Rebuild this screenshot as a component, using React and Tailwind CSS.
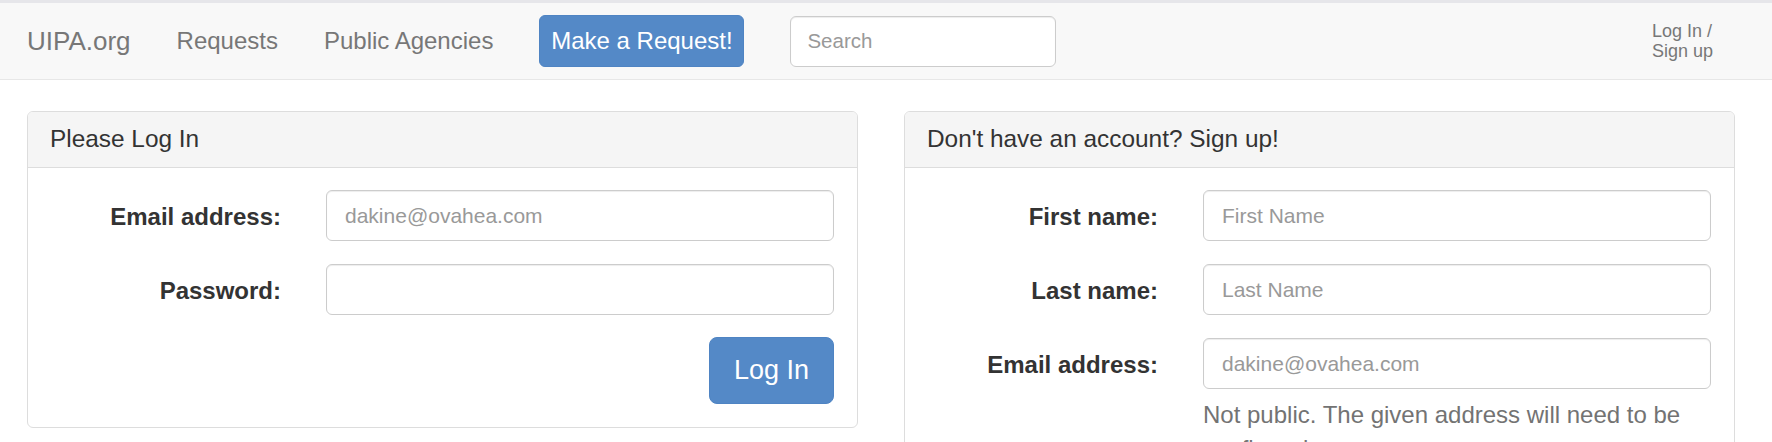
import React from "react";

const font = { fontFamily: '"Liberation Sans", Arial, sans-serif' };

function Field({ label, placeholder, type = "text" }) {
    return (
        <div className="grid grid-cols-[1fr_508px] gap-x-[45px] items-center">
            <label className="text-right text-[24px] font-bold text-[#333] leading-[34px] pt-[3px]">{label}</label>
            <input
                type={type}
                placeholder={placeholder}
                className="h-[51px] w-full rounded-[6px] border border-[#ccc] bg-white px-[18px] text-[21px] text-[#555] placeholder:text-[#999] shadow-[inset_0_1px_1px_rgba(0,0,0,0.075)] outline-none"
            />
        </div>
    );
}

function Panel({ title, children }) {
    return (
        <div className="rounded-[6px] border border-[#ddd] bg-white overflow-hidden">
            <div className="h-[56px] flex items-center px-[22px] bg-[#f5f5f5] border-b border-[#ddd]">
                <h3 className="text-[24.4px] text-[#333] leading-none">{title}</h3>
            </div>
            <div className="pt-[22px] pb-[23px] pl-[23px] pr-[23px]">{children}</div>
        </div>
    );
}

export default function App() {
    return (
        <div className="min-h-screen bg-white" style={font}>
            {/* Navbar */}
            <nav className="h-[80px] border-t-[3px] border-t-[#e6e6ea] border-b border-b-[#e7e7e7] bg-[#f8f8f8] flex items-center pl-[27px] pr-[59px]">
                <div className="flex items-center gap-[46px]">
                    <a className="text-[26px] text-[#777] leading-none">UIPA.org</a>
                    <a className="text-[24px] text-[#777] leading-none">Requests</a>
                    <a className="text-[24px] text-[#777] leading-none">Public Agencies</a>
                    <button className="h-[52px] w-[205px] rounded-[6px] bg-[#5489c7] border border-[#4f84c3] text-white text-[24px] leading-none">
                        Make a Request!
                    </button>
                    <input
                        placeholder="Search"
                        className="h-[51px] w-[266px] rounded-[6px] border border-[#ccc] bg-white px-[16px] text-[20.5px] placeholder:text-[#999] shadow-[inset_0_1px_1px_rgba(0,0,0,0.075)] outline-none"
                    />
                </div>
                <div className="ml-auto text-[18px] leading-[20px] text-[#777] whitespace-nowrap">
                    <div>Log In /</div>
                    <div>Sign up</div>
                </div>
            </nav>

            {/* Content */}
            <main className="grid grid-cols-2 gap-[46px] pl-[27px] pr-[37px] pt-[31px] items-start">
                <Panel title="Please Log In">
                    <div className="flex flex-col gap-[23px]">
                        <Field label="Email address:" placeholder="dakine@ovahea.com" />
                        <Field label="Password:" type="password" />
                    </div>
                    <div className="flex justify-end mt-[22px]">
                        <button className="h-[67px] w-[125px] rounded-[8px] bg-[#5489c7] border border-[#4f84c3] text-white text-[27px] leading-none">
                            Log In
                        </button>
                    </div>
                </Panel>

                <Panel title="Don't have an account? Sign up!">
                    <div className="flex flex-col gap-[23px]">
                        <Field label="First name:" placeholder="First Name" />
                        <Field label="Last name:" placeholder="Last Name" />
                        <div>
                            <Field label="Email address:" placeholder="dakine@ovahea.com" />
                            <div className="grid grid-cols-[1fr_508px] gap-x-[45px]">
                                <div />
                                <p className="mt-[9px] text-[24px] leading-[34px] text-[#737373]">
                                    Not public. The given address will need to be confirmed.
                                </p>
                            </div>
                        </div>
                    </div>
                </Panel>
            </main>
        </div>
    );
}
